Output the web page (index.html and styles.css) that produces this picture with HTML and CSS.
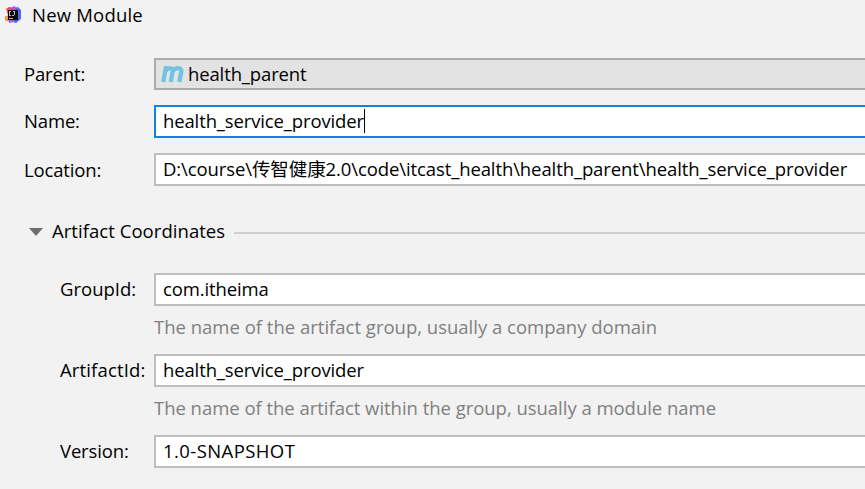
FILE: index.html
```html
<!DOCTYPE html>
<html lang="en"><head><meta charset="utf-8"><title>New Module</title><link rel="stylesheet" href="styles.css"></head>
<body>
<header class="titlebar">
<svg class="logo" viewBox="0 0 18 18"><path d="M1 3L4 1L10 2L9 10L5 16L0 14L3 9Z" fill="#f0445f"/><path d="M0 10L6 11L6 16L0 14Z" fill="#ff9040"/><path d="M6 2L9 0L12 2L10 9L5 7Z" fill="#c24bd8"/><path d="M10 2L13 1L16 4L16 13L11 17L5 15L10 9Z" fill="#5069f0"/><path d="M4 14L8 13L9 16L4 17Z" fill="#a85ee8"/><rect x="3" y="4" width="10" height="10" fill="#090909"/><path d="M4.500 5v4.500M4 5.500h2M4 9.500h2M8 5.500h2M9.500 5v4M7 9.500h2" stroke="#b5b5b5" fill="none"/><path d="M4 12.500h4" stroke="#aaa"/></svg>
<h1 class="title">New Module</h1>
</header>
<main class="form">
<div class="row parent"><label class="label tight">Parent:</label><div class="field combo"><svg class="maven" viewBox="0 0 24 18"><path d="M2.200 17L5.200 1.200M4.500 6Q6.500 3.200 8.700 3.200Q12.300 3.200 11.600 7L9.800 17M11.500 6.500Q14 3.200 16.800 3.200Q21 3.200 20.200 7L18.400 17" fill="none" stroke="#70c4e2" stroke-width="4.300"/></svg><span class="value">health_parent</span></div></div>
<div class="row name"><label class="label tight">Name:</label><div class="field focus"><span class="value">health_service_provider</span><i class="caret"></i></div></div>
<div class="row location"><label class="label tight">Location:</label><div class="field"><span class="path">D:\course\传智健康2.0\code\itcast_health\health_parent\health_service_provider</span></div></div>
<div class="section"><span class="arrow"></span><span class="heading">Artifact Coordinates</span><span class="rule"></span></div>
<div class="row sub group"><label class="label">GroupId:</label><div class="field"><span class="value">com.itheima</span></div></div>
<p class="hint">The name of the artifact group, usually a company domain</p>
<div class="row sub"><label class="label wide">ArtifactId:</label><div class="field"><span class="value">health_service_provider</span></div></div>
<p class="hint second">The name of the artifact within the group, usually a module name</p>
<div class="row sub"><label class="label tight">Version:</label><div class="field"><span class="version">1.0-SNAPSHOT</span></div></div>
</main></body></html>
```
FILE: styles.css
```css
*{box-sizing:border-box}
body{margin:0;width:865px;height:489px;overflow:hidden;background:#f2f2f2;color:#000;font:18.5px/24px "Open Sans","Noto Sans CJK SC",sans-serif;white-space:nowrap}
.titlebar{height:30px;display:flex;align-items:center;padding-left:5px}
.logo{width:18px;height:18px;margin-right:9px}
.title{margin:0;font:inherit;letter-spacing:.2px}
.row{display:flex;align-items:center;height:33px;padding-left:24px}
.label{width:130px;flex:none;padding-bottom:2px}
.sub{padding-left:60px}
.sub .label{width:94px}
.tight{letter-spacing:-.15px}
.wide{letter-spacing:.15px}
.parent{height:32px;margin-top:28px}
.parent .label{padding-bottom:0}
.name{margin-top:15px}
.location{margin-top:15px}
.location .label{padding-bottom:0}
.group{margin-top:30px}
.field{flex:1;height:33px;display:flex;align-items:center;border:2px solid #bebebe;border-right:0;background:#fff;padding:0 0 2px 7px}
.combo{height:32px;border-color:#adadad;background:#e3e3e3;padding:0 0 0 5px}
.maven{width:24px;height:18px;margin-right:3px;margin-bottom:1px}
.value{letter-spacing:-.13px}
.path{letter-spacing:-.1px}
.version{letter-spacing:.42px}
.focus{border-color:#0f84dc;padding-bottom:1px}
.focus .value{padding-bottom:1px}
.caret{width:1px;height:24px;background:#000}
.section{height:24px;margin-top:33px;padding-left:29px;display:flex;align-items:center}
.arrow{border:7px solid transparent;border-top:8px solid #6e6e6e;border-bottom:0;margin:1px 9px 0 0}
.heading{letter-spacing:.05px}
.rule{flex:1;height:2px;background:#cfcfcf;margin:4px 0 0 9px}
.hint{margin:0;height:48px;padding:9px 0 0 154px;color:#808080}
.second{letter-spacing:-.03px}
```
